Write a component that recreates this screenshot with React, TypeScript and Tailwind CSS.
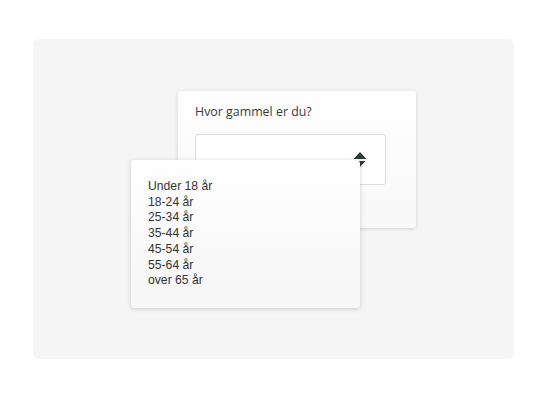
import React from 'react'

const OPTIONS = ['Under 18 år', '18-24 år', '25-34 år', '35-44 år', '45-54 år', '55-64 år', 'over 65 år']

export default function App() {
    return (
        <div className="w-[547px] h-[400px] bg-white pt-[39px] pl-[33px]" style={{ fontFamily: '"Open Sans", "Noto Sans", sans-serif' }}>
            <div className="w-[481px] h-[320px] rounded-md bg-[#f5f5f5] pt-[52px] pl-[145px]">
                {/* Question card */}
                <div className="relative w-[238px] h-[137px] rounded bg-gradient-to-b from-white to-[#f8f8f8] shadow-[0_1px_4px_rgba(0,0,0,0.14)] px-[17px] pt-[11px]">
                    <p className="text-[12.4px] leading-[20px] text-[#3a3a3a]">Hvor gammel er du?</p>
                    <div className="mt-[12px] w-[191px] h-[51px] rounded-[3px] border border-[#dcdcdc] bg-white flex items-center justify-end pr-[18px]">
                        <svg width="14" height="18" viewBox="0 0 14 18">
                            <path d="M7 1 L13.5 8 L0.5 8 Z" fill="#2f3b3b" />
                            <path d="M1.5 10 L12.5 10 L7 16 Z" fill="#2f3b3b" />
                        </svg>
                    </div>

                    {/* Dropdown list */}
                    <div className="absolute left-[-47px] top-[69px] w-[229px] h-[148px] rounded bg-gradient-to-b from-white to-[#f6f6f6] shadow-[0_1px_5px_rgba(0,0,0,0.18)] pl-[17px] pt-[19px]">
                        <ul className="text-[12.2px] leading-[15.7px] text-[#333]" style={{ fontFamily: '"Liberation Sans", Arial, sans-serif' }}>
                            {OPTIONS.map((o) => (
                                <li key={o}>{o}</li>
                            ))}
                        </ul>
                    </div>
                </div>
            </div>
        </div>
    )
}
